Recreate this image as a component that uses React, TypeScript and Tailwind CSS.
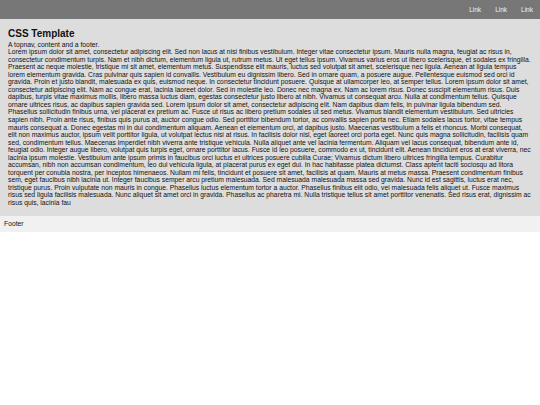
import React from 'react';

const LOREM =
  'Lorem ipsum dolor sit amet, consectetur adipiscing elit. Sed non lacus at nisi finibus vestibulum. Integer vitae consectetur ipsum. Mauris nulla magna, feugiat ac risus in, consectetur condimentum turpis. Nam et nibh dictum, elementum ligula ut, rutrum metus. Ut eget tellus ipsum. Vivamus varius eros ut libero scelerisque, et sodales ex fringilla. Praesent ac neque molestie, tristique mi sit amet, elementum metus. Suspendisse elit mauris, luctus sed volutpat sit amet, scelerisque nec ligula. Aenean at ligula tempus lorem elementum gravida. Cras pulvinar quis sapien id convallis. Vestibulum eu dignissim libero. Sed in ornare quam, a posuere augue. Pellentesque euismod sed orci id gravida. Proin et justo blandit, malesuada ex quis, euismod neque. In consectetur tincidunt posuere. Quisque at ullamcorper leo, at semper tellus. Lorem ipsum dolor sit amet, consectetur adipiscing elit. Nam ac congue erat, lacinia laoreet dolor. Sed in molestie leo. Donec nec magna ex. Nam ac lorem risus. Donec suscipit elementum risus. Duis dapibus, turpis vitae maximus mollis, libero massa luctus diam, egestas consectetur justo libero at nibh. Vivamus ut consequat arcu. Nulla at condimentum tellus. Quisque ornare ultrices risus, ac dapibus sapien gravida sed. Lorem ipsum dolor sit amet, consectetur adipiscing elit. Nam dapibus diam felis, in pulvinar ligula bibendum sed. Phasellus sollicitudin finibus urna, vel placerat ex pretium ac. Fusce ut risus ac libero pretium sodales ut sed metus. Vivamus blandit elementum vestibulum. Sed ultricies sapien nibh. Proin ante risus, finibus quis purus at, auctor congue odio. Sed porttitor bibendum tortor, ac convallis sapien porta nec. Etiam sodales lacus tortor, vitae tempus mauris consequat a. Donec egestas mi in dui condimentum aliquam. Aenean et elementum orci, at dapibus justo. Maecenas vestibulum a felis et rhoncus. Morbi consequat, elit non maximus auctor, ipsum velit porttitor ligula, ut volutpat lectus nisi at risus. In facilisis dolor nisl, eget laoreet orci porta eget. Nunc quis magna sollicitudin, facilisis quam sed, condimentum tellus. Maecenas imperdiet nibh viverra ante tristique vehicula. Nulla aliquet ante vel lacinia fermentum. Aliquam vel lacus consequat, bibendum ante id, feugiat odio. Integer augue libero, volutpat quis turpis eget, ornare porttitor lacus. Fusce id leo posuere, commodo ex ut, tincidunt elit. Aenean tincidunt eros at erat viverra, nec lacinia ipsum molestie. Vestibulum ante ipsum primis in faucibus orci luctus et ultrices posuere cubilia Curae; Vivamus dictum libero ultrices fringilla tempus. Curabitur accumsan, nibh non accumsan condimentum, leo dui vehicula ligula, at placerat purus ex eget dui. In hac habitasse platea dictumst. Class aptent taciti sociosqu ad litora torquent per conubia nostra, per inceptos himenaeos. Nullam mi felis, tincidunt et posuere sit amet, facilisis at quam. Mauris at metus massa. Praesent condimentum finibus sem, eget faucibus nibh lacinia ut. Integer faucibus semper arcu pretium malesuada. Sed malesuada malesuada massa sed gravida. Nunc id est sagittis, luctus erat nec, tristique purus. Proin vulputate non mauris in congue. Phasellus luctus elementum tortor a auctor. Phasellus finibus elit odio, vel malesuada felis aliquet ut. Fusce maximus risus sed ligula facilisis malesuada. Nunc aliquet sit amet orci in gravida. Phasellus ac pharetra mi. Nulla tristique tellus sit amet porttitor venenatis. Sed risus erat, dignissim ac risus quis, lacinia fau';

export default function App() {
  return (
    <div className="font-['Liberation_Sans',Arial,sans-serif] text-[6.78px] leading-[7.55px] text-[#111]">
      {/* top navigation */}
      <nav className="flex h-[19px] items-center justify-end bg-[#777] text-[6.5px]">
        {['Link', 'Link', 'Link'].map((label, i) => (
          <a key={i} href="#" className="px-[7px] text-[#f2f2f2]">
            {label}
          </a>
        ))}
      </nav>

      {/* content */}
      <main className="bg-[#ddd] px-2 pt-[9px] pb-[9px]">
        <h2 className="text-[10px] font-bold leading-[11.5px]">CSS Template</h2>
        <p className="mt-[1px]">A topnav, content and a footer.</p>
        <p>{LOREM}</p>
      </main>

      {/* footer */}
      <footer className="flex h-4 items-center bg-[#f1f1f1] px-1">Footer</footer>
    </div>
  );
}
